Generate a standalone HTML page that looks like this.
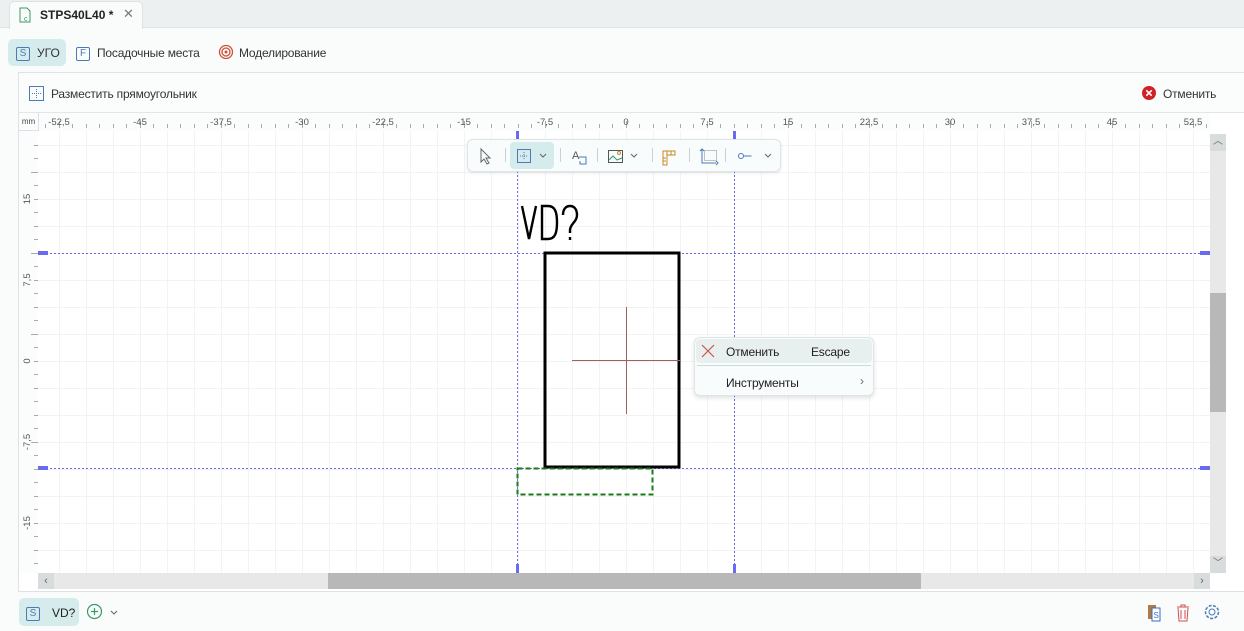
<!DOCTYPE html>
<html><head><meta charset="utf-8"><style>
*{box-sizing:border-box;margin:0;padding:0}
body{width:1244px;height:631px;overflow:hidden;background:#f9fcfb;font-family:"Liberation Sans",sans-serif;font-size:12px;color:#333;position:relative}
.a{position:absolute}
.ic{display:inline-block;border:1px solid #4a7ab8;border-radius:2px;color:#4a7ab8;font-size:10px;text-align:center;line-height:12px;width:14px;height:14px}
</style></head><body>
<div class="a" style="left:0;top:0;width:1244px;height:28px;background:#edf0f0;border-bottom:1px solid #dde2e2"></div>
<div class="a" style="left:9px;top:1px;width:134px;height:28px;background:#f9fcfb;border:1px solid #dde2e2;border-bottom:none;border-radius:5px 5px 0 0"></div>
<svg class="a" style="left:19px;top:7px" width="12" height="16"><path d="M1 1h7l3 3v11H1z" fill="none" stroke="#3a9a6a"/><text x="5" y="14" font-size="7" fill="#3a9a6a" font-family="Liberation Sans">c</text></svg>
<div class="a" style="left:40px;top:8px;font-weight:bold;font-size:12px;color:#222">STPS40L40 *</div>
<div class="a" style="left:123px;top:6px;font-size:13px;color:#777">✕</div>
<div class="a" style="left:8px;top:39px;width:58px;height:27px;background:#d6ecec;border-radius:5px"></div>
<div class="a" style="left:16px;top:45px"><span class="ic">S</span></div>
<div class="a" style="left:37px;top:46px;font-size:12px">УГО</div>
<div class="a" style="left:76px;top:45px"><span class="ic">F</span></div>
<div class="a" style="left:97px;top:46px;font-size:12px;letter-spacing:-0.2px">Посадочные места</div>
<svg class="a" style="left:218px;top:44px" width="16" height="16"><circle cx="8" cy="8" r="6.5" fill="none" stroke="#d0503a" stroke-width="1.3"/><circle cx="8" cy="8" r="4" fill="none" stroke="#d0503a" stroke-width="1.3"/><circle cx="8" cy="8" r="1.5" fill="#d0503a"/></svg>
<div class="a" style="left:239px;top:46px;font-size:12px;letter-spacing:-0.2px">Моделирование</div>
<div class="a" style="left:18px;top:72px;width:1226px;height:520px;border:1px solid #dde3e3;border-right:none;background:#fff"></div>
<div class="a" style="left:19px;top:73px;width:1225px;height:40px;background:#fbfdfd;border-bottom:1px solid #e2e6e6"></div>
<svg class="a" style="left:29px;top:86px" width="15" height="15"><rect x="0.5" y="0.5" width="14" height="14" fill="none" stroke="#4a7ab8"/><path d="M7.5 3v9M3 7.5h9" stroke="#4a7ab8" stroke-dasharray="1 1"/></svg>
<div class="a" style="left:51px;top:87px;font-size:12px;letter-spacing:-0.2px">Разместить прямоугольник</div>
<svg class="a" style="left:1142px;top:86px" width="14" height="14"><circle cx="7" cy="7" r="7" fill="#d0202a"/><path d="M4.3 4.3l5.4 5.4M9.7 4.3l-5.4 5.4" stroke="#fff" stroke-width="1.6"/></svg>
<div class="a" style="left:1163px;top:87px;font-size:12px;letter-spacing:-0.2px">Отменить</div>
<div class="a" style="left:19px;top:113px;width:1191px;height:18px;background:#fbfdfd"></div>
<div class="a" style="left:19px;top:113px;width:20px;height:18px;border-right:1px solid #dde;border-bottom:1px solid #dde;font-size:8px;line-height:18px;text-align:center;color:#444">mm</div>
<div class="a" style="left:19px;top:131px;width:19px;height:442px;background:#fbfdfd"></div>
<svg class="a" style="left:0;top:0" width="1244" height="631" font-family="Liberation Sans" font-size="9.5" fill="#555">
<defs>
<pattern id="g" x="59" y="145" width="27" height="27" patternUnits="userSpaceOnUse"><path d="M0 0V27M0 0H27" stroke="#e6e9e9" stroke-width="1" fill="none"/></pattern>
</defs>
<rect x="38" y="131" width="1172" height="442" fill="#fff"/>
<rect x="38" y="131" width="1172" height="442" fill="url(#g)"/>
<g stroke="#aaa" stroke-width="1">
<path d="M45.5 124v4M59.5 121v7M72.5 124v4M86.5 124v4M99.5 124v4M113.5 124v4M126.5 124v4M140.5 121v7M153.5 124v4M167.5 124v4M180.5 124v4M194.5 124v4M207.5 124v4M221.5 121v7M234.5 124v4M248.5 124v4M261.5 124v4M275.5 124v4M288.5 124v4M302.5 121v7M315.5 124v4M329.5 124v4M342.5 124v4M356.5 124v4M369.5 124v4M383.5 121v7M396.5 124v4M410.5 124v4M423.5 124v4M437.5 124v4M450.5 124v4M464.5 121v7M477.5 124v4M491.5 124v4M504.5 124v4M518.5 124v4M531.5 124v4M545.5 121v7M558.5 124v4M572.5 124v4M585.5 124v4M599.5 124v4M612.5 124v4M626.5 121v7M639.5 124v4M653.5 124v4M666.5 124v4M680.5 124v4M693.5 124v4M707.5 121v7M720.5 124v4M734.5 124v4M747.5 124v4M761.5 124v4M774.5 124v4M788.5 121v7M801.5 124v4M815.5 124v4M828.5 124v4M842.5 124v4M855.5 124v4M869.5 121v7M882.5 124v4M896.5 124v4M909.5 124v4M923.5 124v4M936.5 124v4M950.5 121v7M963.5 124v4M977.5 124v4M990.5 124v4M1004.5 124v4M1017.5 124v4M1031.5 121v7M1044.5 124v4M1058.5 124v4M1071.5 124v4M1085.5 124v4M1098.5 124v4M1112.5 121v7M1125.5 124v4M1139.5 124v4M1152.5 124v4M1166.5 124v4M1179.5 124v4M1193.5 121v7M1206.5 124v4"/>
<path d="M34 145.5h4M34 158.5h4M31 172.5h7M34 185.5h4M34 199.5h4M34 212.5h4M34 226.5h4M34 239.5h4M31 253.5h7M34 266.5h4M34 280.5h4M34 293.5h4M34 307.5h4M34 320.5h4M31 334.5h7M34 347.5h4M34 361.5h4M34 374.5h4M34 388.5h4M34 401.5h4M34 415.5h4M34 428.5h4M31 442.5h7M34 455.5h4M34 469.5h4M34 482.5h4M34 496.5h4M34 509.5h4M34 523.5h4M34 536.5h4M34 550.5h4M34 563.5h4"/>
</g>
<g text-anchor="middle">
<text x="59" y="125">-52,5</text><text x="140" y="125">-45</text><text x="221" y="125">-37,5</text><text x="302" y="125">-30</text><text x="383" y="125">-22,5</text><text x="464" y="125">-15</text><text x="545" y="125">-7,5</text><text x="626" y="125">0</text><text x="707" y="125">7,5</text><text x="788" y="125">15</text><text x="869" y="125">22,5</text><text x="950" y="125">30</text><text x="1031" y="125">37,5</text><text x="1112" y="125">45</text><text x="1193" y="125">52,5</text>
<text transform="translate(30,199) rotate(-90)">15</text>
<text transform="translate(30,280) rotate(-90)">7,5</text>
<text transform="translate(30,361) rotate(-90)">0</text>
<text transform="translate(30,442) rotate(-90)">-7,5</text>
<text transform="translate(30,523) rotate(-90)">-15</text>
</g>
<g stroke="#6a6af0" stroke-width="1" stroke-dasharray="2 2">
<path d="M38 253.5H1210M38 468.5H1210M517.5 131V573M734.5 131V573"/>
</g>
<g fill="#6a6af0">
<rect x="38" y="251" width="10" height="4"/><rect x="38" y="466" width="10" height="4"/>
<rect x="1200" y="251" width="10" height="4"/><rect x="1200" y="466" width="10" height="4"/>
<rect x="516" y="131" width="3" height="8"/><rect x="733" y="131" width="3" height="8"/>
<rect x="516" y="564" width="3" height="9"/><rect x="733" y="564" width="3" height="9"/>
</g>
<rect x="545" y="253" width="134" height="214" fill="none" stroke="#000" stroke-width="3"/>
<path d="M572 360.5H680M626.5 307V414" stroke="#a06060" stroke-width="1"/>
<rect x="517.5" y="468.5" width="135" height="26" fill="none" stroke="#1a7a1a" stroke-width="2" stroke-dasharray="5 3"/>
<path d="M522 206l7 33 7-33M542 206v33h6c7 0 9-6 9-16.5s-2-16.5-9-16.5z M563 215c0-6 3-9 7-9s7 3 7 9c0 7-7 9-7 15v3" fill="none" stroke="#000" stroke-width="2.4"/>
<path d="M570 237v3" stroke="#000" stroke-width="2.4"/>
</svg>
<div class="a" style="left:467px;top:139px;width:314px;height:33px;background:#f9fcfc;border:1px solid #dfe4e4;border-radius:6px;box-shadow:0 1px 3px rgba(0,0,0,.1)"></div>
<div class="a" style="left:510px;top:142px;width:44px;height:27px;background:#d6ecec;border-radius:4px"></div>
<svg class="a" style="left:467px;top:139px" width="314" height="33" fill="none" stroke-width="1">
<path d="M14 10v13l3-3 3 5 2-1-3-5h4z" stroke="#666"/>
<path d="M38.5 9v14M93.5 9v14M130.5 9v14M185.5 9v14M222.5 9v14M258.5 9v14" stroke="#c8d4d4"/>
<rect x="50.5" y="10.5" width="13" height="13" stroke="#4a7ab8"/><path d="M57 13v8M53 17h8" stroke="#4a7ab8" stroke-dasharray="1 1"/>
<path d="M73 15l3 3 3-3M164 15l3 3 3-3M298 15l3 3 3-3" stroke="#666"/>
<text x="105" y="20" font-size="11" fill="#555" stroke="none" font-family="Liberation Sans">A</text><path d="M112 18h7v7h-6v-3" stroke="#4a7ab8"/>
<rect x="141.5" y="11.5" width="14" height="12" stroke="#555"/><path d="M142 21l4-4 4 4 5-2" stroke="#3a9a6a"/><circle cx="152" cy="14" r="1.5" stroke="#d08a20"/>
<path d="M196 12h12v4h-8v10h-4z" stroke="#c88a20"/><path d="M200 12v4M204 12v4M196 19h3M196 22h3" stroke="#c88a20"/>
<rect x="237.5" y="11.5" width="12" height="10" stroke="#888" stroke-dasharray="1 1"/><path d="M235 10v14h14M249 22l2 2-2 2M233 12l2-2 2 2" stroke="#4a7ab8"/>
<circle cx="274" cy="17" r="2.5" stroke="#4a7ab8"/><path d="M276.5 17h8" stroke="#4a7ab8"/>
</svg>
<div class="a" style="left:694px;top:337px;width:180px;height:59px;background:#f9fcfc;border:1px solid #dfe4e4;border-radius:6px;box-shadow:0 2px 5px rgba(0,0,0,.12)"></div>
<div class="a" style="left:696px;top:339px;width:176px;height:24px;background:#e8efef;border-radius:4px"></div>
<div class="a" style="left:697px;top:365px;width:174px;height:1px;background:#c8dada"></div>
<svg class="a" style="left:701px;top:344px" width="14" height="14"><path d="M1 1l12 12M13 1L1 13" stroke="#d05050" stroke-width="1.2"/></svg>
<div class="a" style="left:726px;top:345px;font-size:12px;color:#222;letter-spacing:-0.2px">Отменить</div>
<div class="a" style="left:811px;top:345px;font-size:12px;color:#222;letter-spacing:-0.2px">Escape</div>
<div class="a" style="left:726px;top:376px;font-size:12px;color:#222;letter-spacing:-0.2px">Инструменты</div>
<div class="a" style="left:860px;top:374px;font-size:12px;color:#666">›</div>
<div class="a" style="left:1210px;top:134px;width:16px;height:439px;background:#e8e8e8"></div>
<div class="a" style="left:1210px;top:134px;width:16px;height:17px;background:#d8dcdc;font-size:10px;text-align:center;color:#666;line-height:16px">︿</div>
<div class="a" style="left:1210px;top:293px;width:16px;height:119px;background:#b8b8b8"></div>
<div class="a" style="left:1210px;top:556px;width:16px;height:17px;background:#d8dcdc;font-size:10px;text-align:center;color:#666;line-height:16px">﹀</div>
<div class="a" style="left:38px;top:573px;width:1172px;height:16px;background:#e8e8e8"></div>
<div class="a" style="left:38px;top:573px;width:16px;height:16px;background:#d8dcdc;font-size:11px;text-align:center;color:#666;line-height:16px">‹</div>
<div class="a" style="left:1194px;top:573px;width:16px;height:16px;background:#d8dcdc;font-size:11px;text-align:center;color:#666;line-height:16px">›</div>
<div class="a" style="left:328px;top:573px;width:593px;height:16px;background:#b8b8b8"></div>
<div class="a" style="left:19px;top:598px;width:60px;height:28px;background:#d6ecec;border-radius:5px"></div>
<div class="a" style="left:26px;top:605px"><span class="ic">S</span></div>
<div class="a" style="left:52px;top:606px;font-size:12px;color:#222">VD?</div>
<svg class="a" style="left:86px;top:603px" width="36" height="18"><circle cx="8.5" cy="8.5" r="7" fill="none" stroke="#3a9a6a" stroke-width="1.2"/><path d="M8.5 5v7M5 8.5h7" stroke="#3a9a6a" stroke-width="1.2"/><path d="M25 8l3 3 3-3" fill="none" stroke="#666"/></svg>
<svg class="a" style="left:1146px;top:602px" width="80" height="20" fill="none">
<rect x="2" y="3" width="8" height="14" fill="#b07a40"/><rect x="6" y="6" width="8" height="13" fill="#fff" stroke="#3a6ac8"/><text x="7.5" y="16" font-size="8" fill="#3a6ac8" font-family="Liberation Sans">S</text>
<path d="M31 5h12M35 5V3h4v2M32 6l1 13h8l1-13M35 8v9M39 8v9" stroke="#d05050"/>
<circle cx="66" cy="10" r="3" stroke="#4a7ab8"/><circle cx="66" cy="10" r="6.5" stroke="#4a7ab8" stroke-dasharray="3 1.5" stroke-width="1.5"/>
</svg>
</body></html>
